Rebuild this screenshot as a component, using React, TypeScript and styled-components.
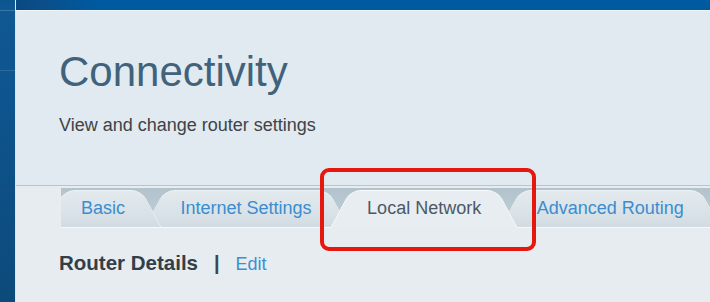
import React from 'react';
import styled, { createGlobalStyle } from 'styled-components';

const GlobalStyle = createGlobalStyle`
  html, body { margin: 0; padding: 0; background: #e6ecf0; }
  body { font-family: "Liberation Sans", Arial, sans-serif; }
  * { box-sizing: border-box; }
`;

const Page = styled.div`
  position: relative;
  width: 710px;
  height: 302px;
  overflow: hidden;
  display: flex;
`;

const Sidebar = styled.div`
  flex: none;
  width: 16px;
  border-right: 1px solid #d9e6ef;
  background:
    linear-gradient(to bottom, transparent 0, transparent 10px, #3a78aa 10px, #3a78aa 11px, transparent 11px, transparent 70px, #2a6a9c 70px, #2a6a9c 71px, transparent 71px),
    linear-gradient(to bottom, #0d5591 0, #0f5892 12px, #0f5590 80px, #0c4a7a 302px);
`;

const Main = styled.div`
  flex: 1;
  display: flex;
  flex-direction: column;
  min-width: 0;
`;

const TopBar = styled.div`
  height: 11px;
  border-bottom: 1px solid #f1f5f8;
  background: linear-gradient(to right, #0a4980 0, #0a4f8c 30px, #005a9f 80px, #005a9f 100%);
`;

const Header = styled.header`
  height: 175px;
  background: #e0eaf0;
  border-bottom: 1px solid #b9c5cd;
  padding: 38px 0 0 43px;
`;

const Title = styled.h1`
  margin: 0;
  font-size: 42px;
  line-height: 46px;
  font-weight: normal;
  color: #41627a;
`;

const Subtitle = styled.p`
  margin: 19px 0 0;
  font-size: 18px;
  line-height: 22px;
  color: #3f4246;
`;

const Content = styled.section`
  flex: 1;
  background: #e6ecf0;
  padding: 2px 0 0 45px;
`;

const TabStrip = styled.nav`
  display: flex;
  align-items: flex-end;
  height: 40px;
  padding-top: 2px;
  overflow: hidden;
  background: linear-gradient(to bottom, #b2c3cd, #c3d1d8);
`;

const Tab = styled.div<{ $active?: boolean; $z: number }>`
  position: relative;
  flex: none;
  display: flex;
  align-items: center;
  height: 38px;
  padding: 0 37px 1px;
  margin-left: -18.5px;
  font-size: 18px;
  color: ${p => (p.$active ? '#4b5965' : '#3a8dd0')};
  z-index: ${p => p.$z};
  cursor: pointer;
  white-space: nowrap;

  &:first-child { margin-left: -17px; }

  & > span { position: relative; z-index: 1; }

  &::before, &::after {
    content: '';
    position: absolute;
    top: 0;
    bottom: 0;
    width: 50%;
    background: ${p =>
      p.$active
        ? '#e7edf1'
        : 'linear-gradient(to bottom, #e3eaee 0%, #dae3e8 55%, #d1dbe1 100%)'};
    border: 1px solid ${p => (p.$active ? '#f8fafb' : '#edf2f4')};
    border-bottom: ${p => (p.$active ? 'none' : '1px solid #f6f9fa')};
  }
  &::before {
    left: 0;
    border-right: none;
    border-radius: 10px 0 0 0;
    transform: skewX(-28deg);
    transform-origin: bottom left;
  }
  &::after {
    right: 0;
    border-left: none;
    border-radius: 0 10px 0 0;
    transform: skewX(28deg);
    transform-origin: bottom right;
  }
`;

const DetailRow = styled.div`
  display: flex;
  align-items: baseline;
  margin: 23px 0 0 -2px;
`;

const DetailTitle = styled.h2`
  margin: 0;
  font-size: 20.5px;
  line-height: 24px;
  font-weight: bold;
  color: #323e48;
`;

const Separator = styled.span`
  margin: 0 16px 0 16px;
  font-size: 20px;
  font-weight: bold;
  color: #3c4650;
`;

const EditLink = styled.a`
  font-size: 18px;
  color: #3b8fd3;
  text-decoration: none;
  cursor: pointer;
`;

const Highlight = styled.div`
  position: absolute;
  left: 320px;
  top: 168px;
  width: 216px;
  height: 83px;
  border: 4px solid #e5170e;
  border-radius: 9px;
  pointer-events: none;
  z-index: 50;
`;

const tabs = ['Basic', 'Internet Settings', 'Local Network', 'Advanced Routing'];
const activeIndex = 2;

export default function App() {
  return (
    <>
      <GlobalStyle />
      <Page>
        <Sidebar />
        <Main>
          <TopBar />
          <Header>
            <Title>Connectivity</Title>
            <Subtitle>View and change router settings</Subtitle>
          </Header>
          <Content>
            <TabStrip>
              {tabs.map((t, i) => (
                <Tab key={t} $active={i === activeIndex} $z={i === activeIndex ? 20 : tabs.length - i}>
                  <span>{t}</span>
                </Tab>
              ))}
            </TabStrip>
            <DetailRow>
              <DetailTitle>Router Details</DetailTitle>
              <Separator>|</Separator>
              <EditLink>Edit</EditLink>
            </DetailRow>
          </Content>
        </Main>
        <Highlight />
      </Page>
    </>
  );
}
